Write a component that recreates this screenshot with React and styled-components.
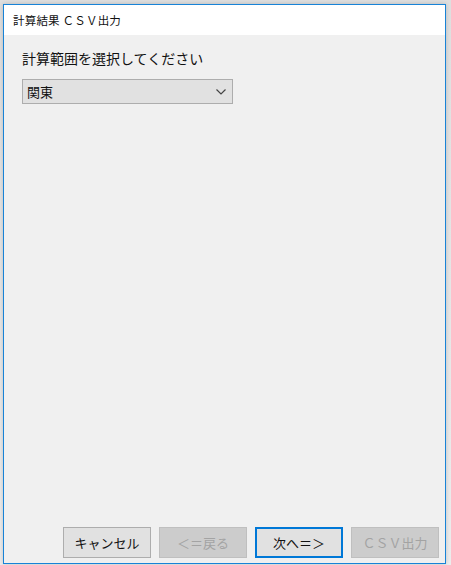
import React from "react";
import styled, { createGlobalStyle } from "styled-components";

const GlobalStyle = createGlobalStyle`
  html, body {
    margin: 0;
    padding: 0;
    background: #e6e6e6;
    font-family: "Noto Sans CJK JP", "Noto Sans", sans-serif;
  }
`;

const Page = styled.div`
  width: 451px;
  height: 565px;
  padding: 4px 5px 1px 3px;
  box-sizing: border-box;
  background: linear-gradient(#dedede, #ececec);
`;

const Window = styled.div`
  height: 100%;
  border: 1px solid #1883d7;
  box-sizing: border-box;
  display: flex;
  flex-direction: column;
  background: #f0f0f0;
  box-shadow: 0 0 4px rgba(0, 0, 0, 0.18);
`;

const TitleBar = styled.div`
  height: 30px;
  background: #ffffff;
  display: flex;
  align-items: center;
  padding-left: 9px;
  font-size: 11.5px;
  color: #111;
  letter-spacing: 0.2px;
`;

const Body = styled.div`
  flex: 1;
  display: flex;
  flex-direction: column;
  padding: 13px 6px 5px 18px;
`;

const Label = styled.div`
  font-size: 14px;
  color: #111;
  line-height: 20px;
`;

const Select = styled.div`
  margin-top: 11px;
  width: 211px;
  height: 25px;
  box-sizing: border-box;
  border: 1px solid #adadad;
  background: #e1e1e1;
  display: flex;
  align-items: center;
  justify-content: space-between;
  padding: 0 6px 0 4px;
  font-size: 13px;
  color: #111;
`;

const Spacer = styled.div`
  flex: 1;
`;

const Footer = styled.div`
  display: flex;
  justify-content: flex-end;
  gap: 8px;
`;

const Button = styled.div`
  width: 88px;
  height: 31px;
  box-sizing: border-box;
  display: flex;
  align-items: center;
  justify-content: center;
  font-size: 13px;
  background: ${(p) => (p.disabled ? "#cccccc" : "#e1e1e1")};
  color: ${(p) => (p.disabled ? "#a3a3a3" : "#111")};
  border: ${(p) =>
    p.primary ? "2px solid #0078d7" : p.disabled ? "1px solid #bfbfbf" : "1px solid #adadad"};
`;

const Chevron = () => (
  <svg width="10" height="6" viewBox="0 0 10 6">
    <path d="M0.5 0.5 L5 5 L9.5 0.5" fill="none" stroke="#444" strokeWidth="1.2" />
  </svg>
);

export default function App() {
  return (
    <Page>
      <GlobalStyle />
      <Window>
        <TitleBar>計算結果 ＣＳＶ出力</TitleBar>
        <Body>
          <Label>計算範囲を選択してください</Label>
          <Select>
            <span>関東</span>
            <Chevron />
          </Select>
          <Spacer />
          <Footer>
            <Button>キャンセル</Button>
            <Button disabled>＜＝戻る</Button>
            <Button primary>次へ＝＞</Button>
            <Button disabled>ＣＳＶ出力</Button>
          </Footer>
        </Body>
      </Window>
    </Page>
  );
}
